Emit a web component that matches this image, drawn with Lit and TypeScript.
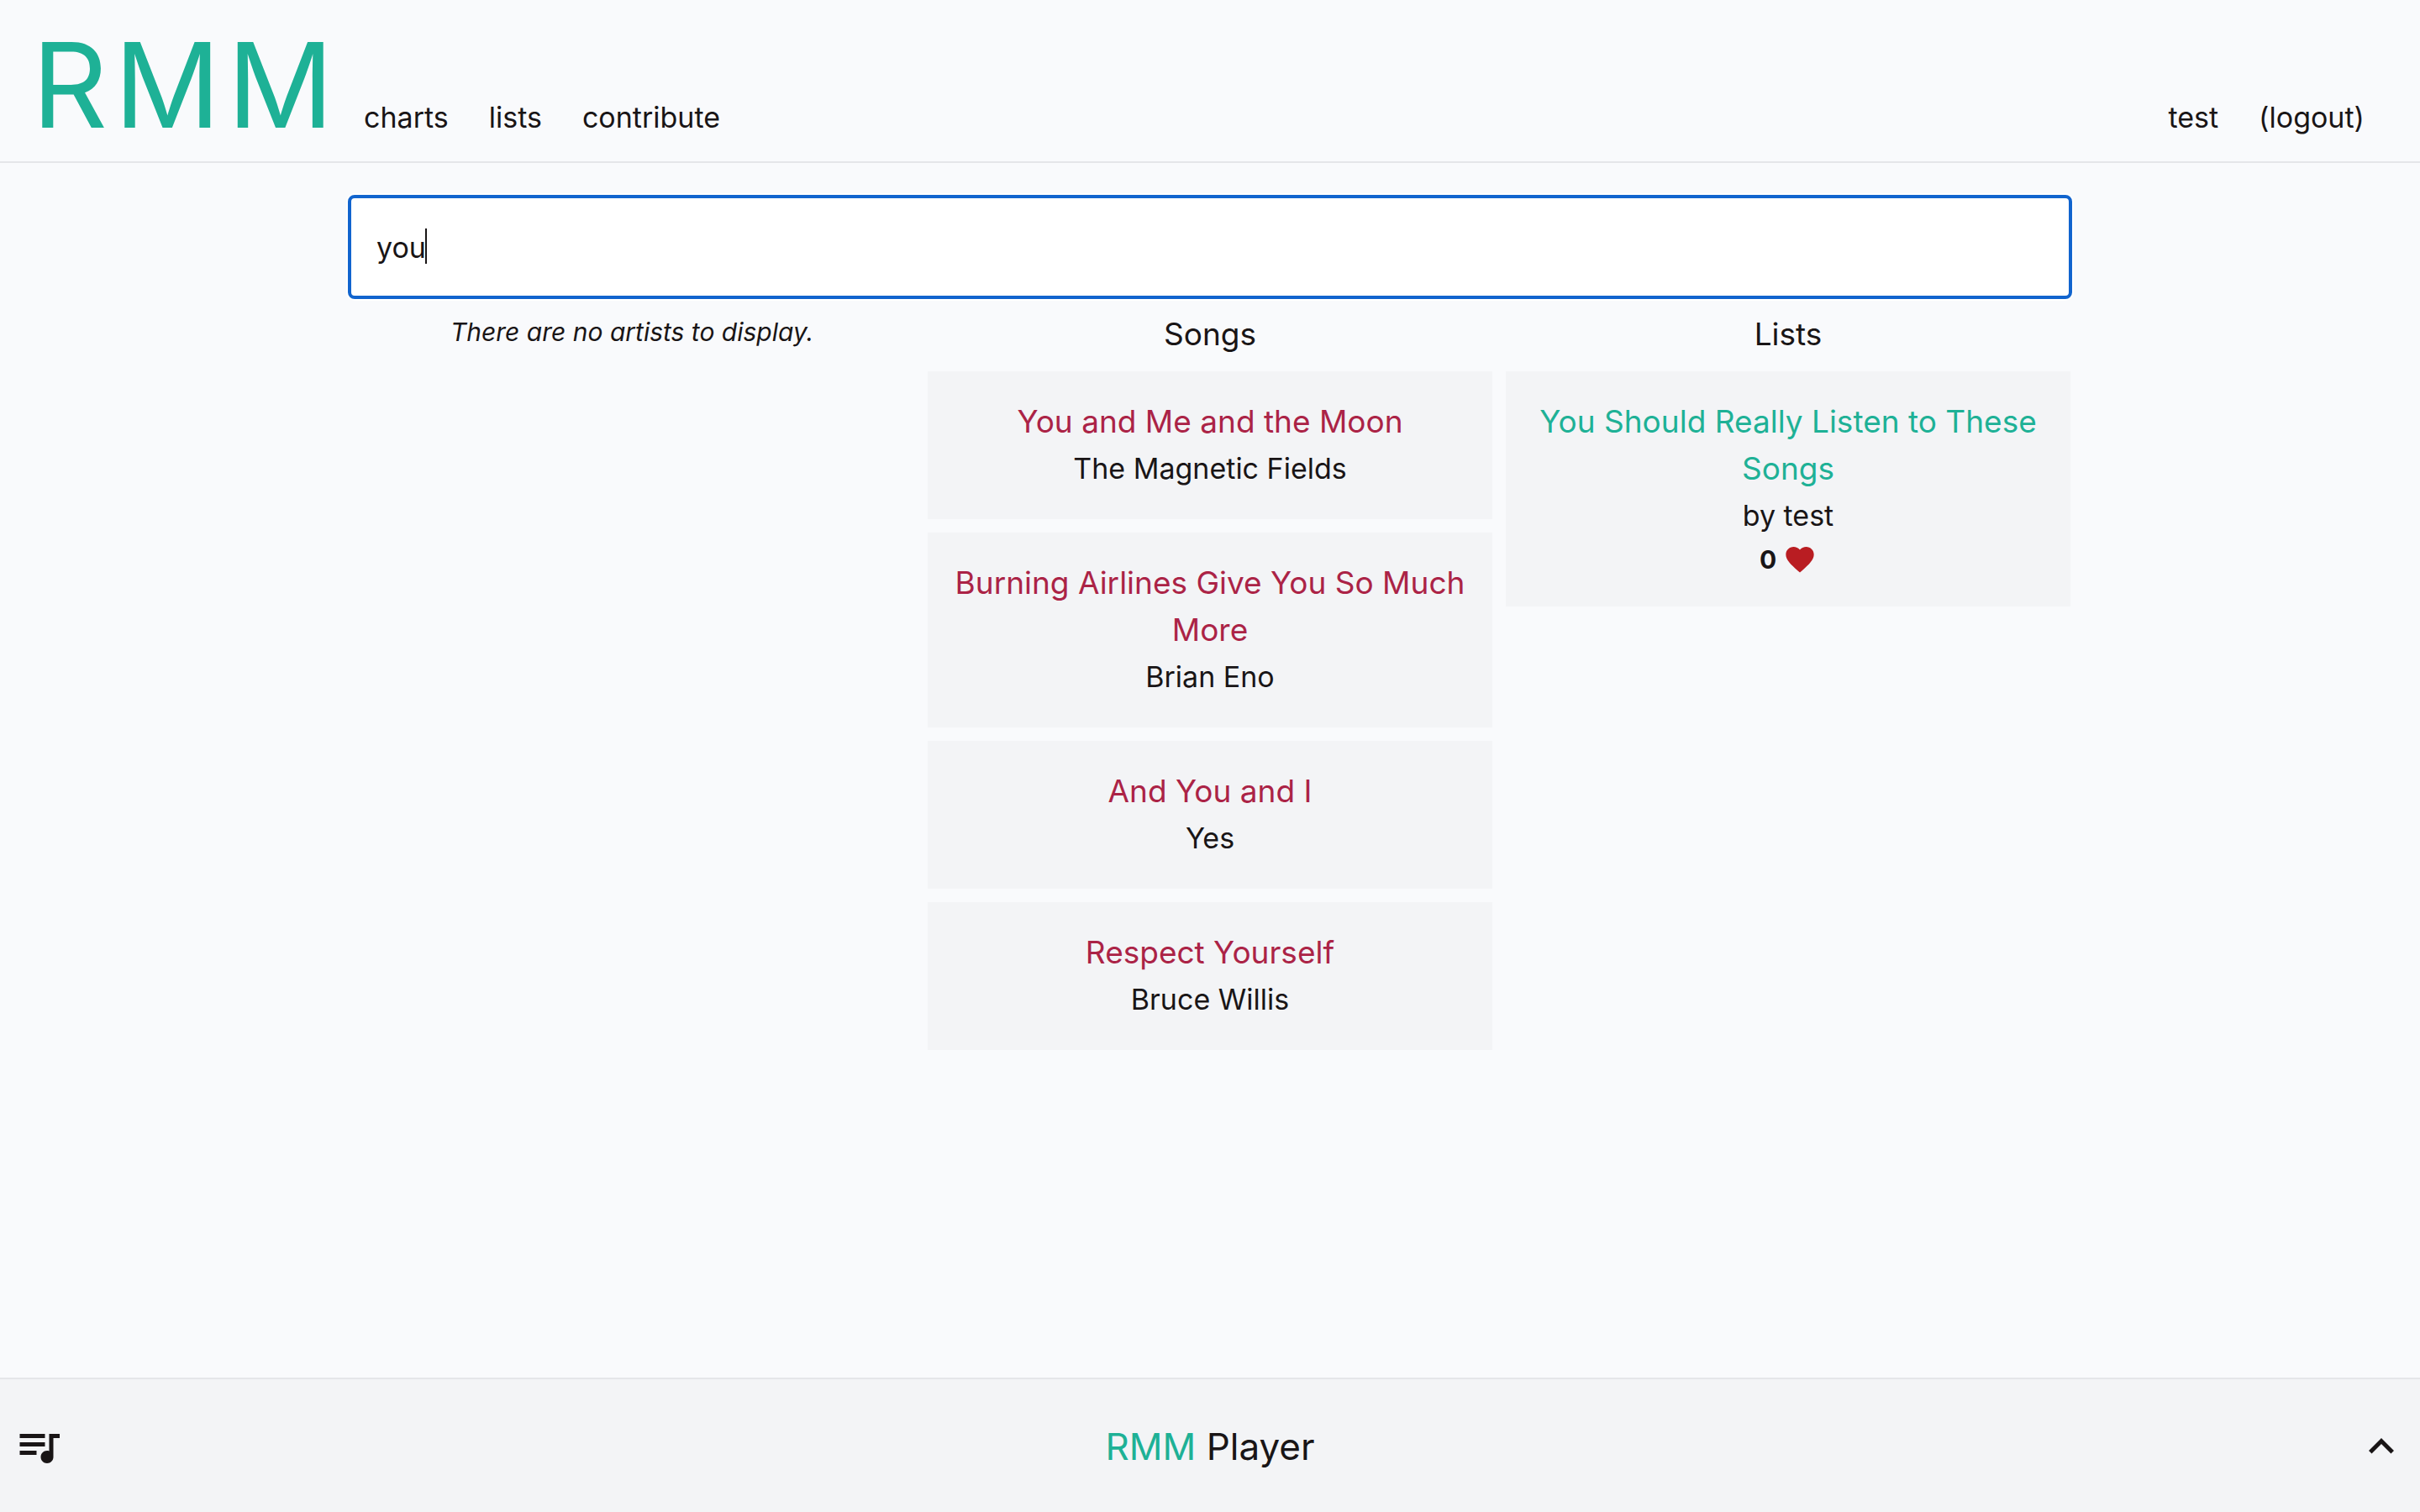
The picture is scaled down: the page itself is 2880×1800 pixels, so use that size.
import { LitElement, html, css } from "lit";
import { customElement, property, state } from "lit/decorators.js";

interface Song {
  title: string;
  artist: string;
}

interface SongList {
  title: string;
  author: string;
  likes: number;
}

const SONGS: Song[] = [
  { title: "You and Me and the Moon", artist: "The Magnetic Fields" },
  { title: "Burning Airlines Give You So Much More", artist: "Brian Eno" },
  { title: "And You and I", artist: "Yes" },
  { title: "Respect Yourself", artist: "Bruce Willis" },
];

const LISTS: SongList[] = [
  { title: "You Should Really Listen to These Songs", author: "test", likes: 0 },
];

@customElement("rmm-header")
export class RmmHeader extends LitElement {
  static styles = css`
    :host {
      display: block;
    }
    .bar {
      display: flex;
      align-items: baseline;
      gap: 48px;
      height: 192px;
      padding: 0 66px 0 38px;
      border-bottom: 2px solid #e5e6e9;
    }
    .logo {
      margin-right: -20px;
      font-size: 140px;
      line-height: 202px;
      letter-spacing: 8px;
      color: #1eb196;
    }
    a {
      color: inherit;
      text-decoration: none;
    }
    .logout {
      padding: 0;
      border: 0;
      background: none;
      color: inherit;
      font: inherit;
    }
    .spacer {
      flex: 1;
    }
  `;

  render() {
    return html`
      <header class="bar">
        <a class="logo" href="#">RMM</a>
        <a href="#charts">charts</a>
        <a href="#lists">lists</a>
        <a href="#contribute">contribute</a>
        <span class="spacer"></span>
        <a href="#test">test</a>
        <button class="logout" type="button">(logout)</button>
      </header>
    `;
  }
}

@customElement("rmm-search")
export class RmmSearch extends LitElement {
  @state() private query = "you";

  static styles = css`
    :host {
      display: block;
    }
    .field {
      position: relative;
    }
    .input {
      display: block;
      box-sizing: border-box;
      width: 100%;
      height: 120px;
      padding: 0 32px;
      border: 0;
      border-radius: 6px;
      outline: 4px solid #1164ce;
      outline-offset: -2px;
      box-shadow: 0 0 0 4px #ffffff;
      background: #ffffff;
      color: inherit;
      font: inherit;
      caret-color: transparent;
    }
    .caret {
      position: absolute;
      top: 38px;
      left: 90px;
      width: 2px;
      height: 42px;
      background: #191516;
    }
  `;

  firstUpdated() {
    this.renderRoot.querySelector("input")?.focus();
  }

  render() {
    return html`
      <div class="field">
        <input
          class="input"
          type="text"
          aria-label="Search"
          .value=${this.query}
          @input=${(e: Event) => (this.query = (e.target as HTMLInputElement).value)}
        />
        <span class="caret"></span>
      </div>
    `;
  }
}

@customElement("rmm-results")
export class RmmResults extends LitElement {
  @property({ attribute: false }) songs: Song[] = [];
  @property({ attribute: false }) lists: SongList[] = [];

  static styles = css`
    :host {
      display: block;
    }
    .columns {
      display: grid;
      grid-template-columns: repeat(3, minmax(0, 1fr));
      gap: 16px;
      text-align: center;
    }
    .column {
      display: flex;
      flex-direction: column;
      gap: 16px;
    }
    .empty {
      margin: 0;
      font-size: 30px;
      line-height: 50px;
      font-style: italic;
    }
    .heading {
      margin: 0;
      font-size: 37px;
      font-weight: 400;
      line-height: 56px;
    }
    .card {
      padding: 32px;
      background: #f3f4f6;
      line-height: 56px;
    }
    .title {
      display: block;
      font-size: 37px;
      text-decoration: none;
    }
    .song {
      color: #ab2346;
    }
    .list {
      color: #1eb196;
    }
    .likes {
      display: flex;
      align-items: center;
      justify-content: center;
      gap: 8px;
      font-size: 30px;
      font-weight: 700;
      line-height: 48px;
    }
    .heart {
      width: 40px;
      height: 40px;
      fill: #b91d22;
    }
  `;

  render() {
    return html`
      <div class="columns">
        <section class="column">
          <p class="empty">There are no artists to display.</p>
        </section>
        <section class="column">
          <h2 class="heading">Songs</h2>
          ${this.songs.map(
            (song) => html`
              <article class="card">
                <a class="title song" href="#song">${song.title}</a>
                <div>${song.artist}</div>
              </article>
            `,
          )}
        </section>
        <section class="column">
          <h2 class="heading">Lists</h2>
          ${this.lists.map(
            (list) => html`
              <article class="card">
                <a class="title list" href="#list">${list.title}</a>
                <div>by ${list.author}</div>
                <div class="likes">
                  ${list.likes}
                  <svg class="heart" viewBox="0 0 24 24" aria-hidden="true">
                    <path
                      d="M12 21.35l-1.45-1.32C5.4 15.36 2 12.28 2 8.5 2 5.42 4.42 3 7.5 3c1.74 0 3.41.81 4.5 2.09C13.09 3.81 14.76 3 16.5 3 19.58 3 22 5.42 22 8.5c0 3.78-3.4 6.86-8.55 11.54L12 21.35z"
                    />
                  </svg>
                </div>
              </article>
            `,
          )}
        </section>
      </div>
    `;
  }
}

@customElement("rmm-player")
export class RmmPlayer extends LitElement {
  static styles = css`
    :host {
      display: block;
    }
    .bar {
      display: flex;
      align-items: center;
      justify-content: space-between;
      padding: 50px 16px 48px;
      border-top: 2px solid #e5e6e9;
      background: #f3f4f6;
    }
    .button {
      display: block;
      padding: 0;
      border: 0;
      background: none;
      color: inherit;
    }
    .icon {
      display: block;
      width: 60px;
      height: 60px;
      fill: currentColor;
    }
    .name {
      font-size: 44px;
      line-height: 60px;
    }
    .brand {
      color: #1eb196;
    }
  `;

  render() {
    return html`
      <footer class="bar">
        <button class="button" type="button" aria-label="Queue">
          <svg class="icon" viewBox="0 0 24 24" aria-hidden="true">
            <path
              d="M15 6H3v2h12V6zm0 4H3v2h12v-2zM3 16h8v-2H3v2zM17 6v8.18c-.31-.11-.65-.18-1-.18-1.66 0-3 1.34-3 3s1.34 3 3 3 3-1.34 3-3V8h3V6h-5z"
            />
          </svg>
        </button>
        <div class="name"><span class="brand">RMM</span> Player</div>
        <button class="button" type="button" aria-label="Expand player">
          <svg class="icon" viewBox="0 0 24 24" aria-hidden="true">
            <path d="M12 8l-6 6 1.41 1.41L12 10.83l4.59 4.58L18 14z" />
          </svg>
        </button>
      </footer>
    `;
  }
}

@customElement("app-root")
export class AppRoot extends LitElement {
  static styles = css`
    :host {
      display: flex;
      flex-direction: column;
      min-height: 100vh;
      background: #f9fafc;
      color: #191516;
      font-family: Inter, "Liberation Sans", sans-serif;
      font-size: 34px;
      line-height: 56px;
    }
    .main {
      display: flex;
      flex: 1;
      flex-direction: column;
      gap: 16px;
      box-sizing: border-box;
      width: 100%;
      max-width: 2048px;
      margin: 0 auto;
      padding: 40px 0;
    }
  `;

  render() {
    return html`
      <rmm-header></rmm-header>
      <main class="main">
        <rmm-search></rmm-search>
        <rmm-results .songs=${SONGS} .lists=${LISTS}></rmm-results>
      </main>
      <rmm-player></rmm-player>
    `;
  }
}
